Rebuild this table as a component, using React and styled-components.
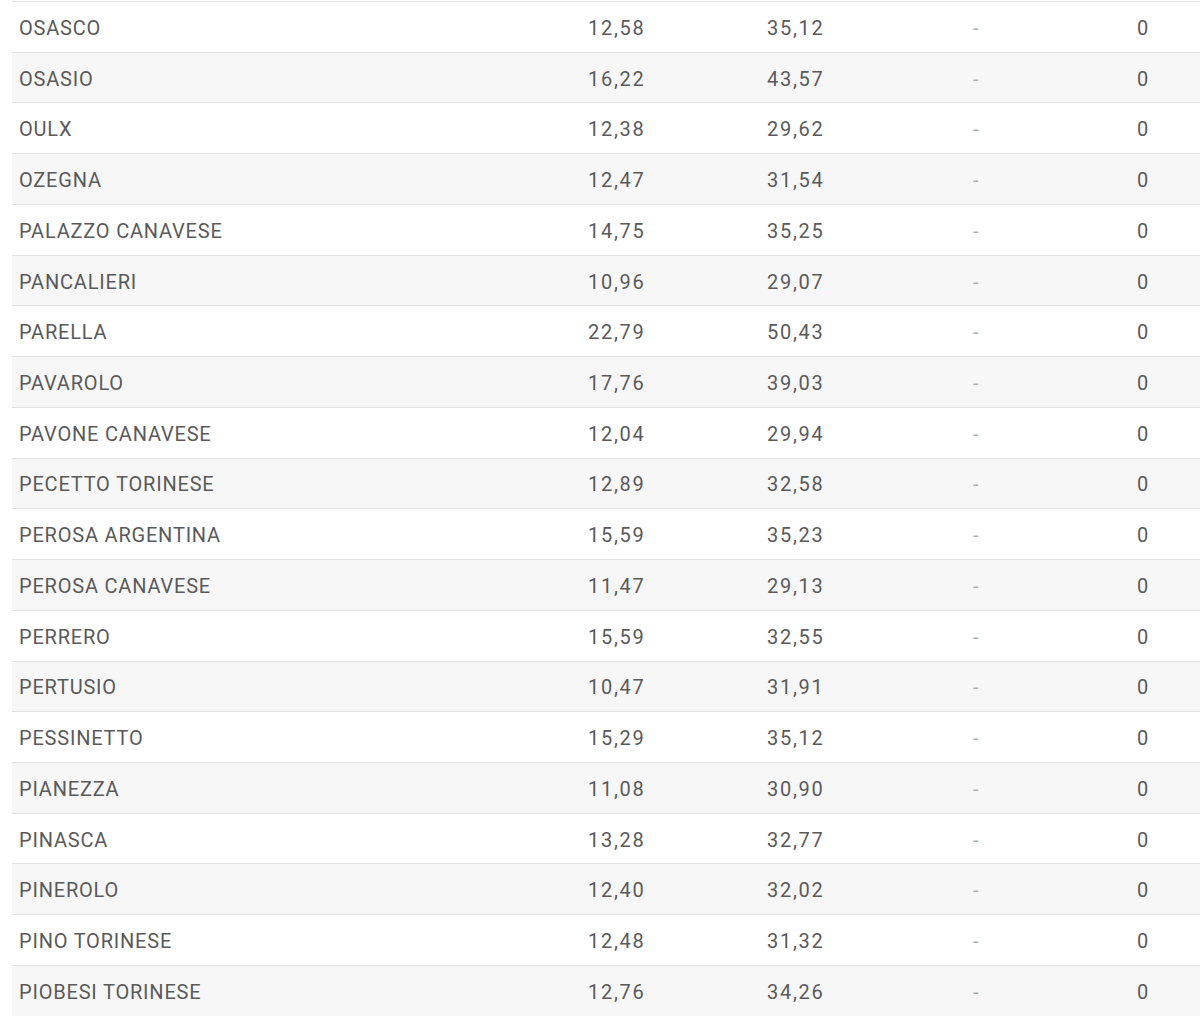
import React from "react";
import styled, { createGlobalStyle } from "styled-components";

const rows = [
  ["OSASCO", "12,58", "35,12"],
  ["OSASIO", "16,22", "43,57"],
  ["OULX", "12,38", "29,62"],
  ["OZEGNA", "12,47", "31,54"],
  ["PALAZZO CANAVESE", "14,75", "35,25"],
  ["PANCALIERI", "10,96", "29,07"],
  ["PARELLA", "22,79", "50,43"],
  ["PAVAROLO", "17,76", "39,03"],
  ["PAVONE CANAVESE", "12,04", "29,94"],
  ["PECETTO TORINESE", "12,89", "32,58"],
  ["PEROSA ARGENTINA", "15,59", "35,23"],
  ["PEROSA CANAVESE", "11,47", "29,13"],
  ["PERRERO", "15,59", "32,55"],
  ["PERTUSIO", "10,47", "31,91"],
  ["PESSINETTO", "15,29", "35,12"],
  ["PIANEZZA", "11,08", "30,90"],
  ["PINASCA", "13,28", "32,77"],
  ["PINEROLO", "12,40", "32,02"],
  ["PINO TORINESE", "12,48", "31,32"],
  ["PIOBESI TORINESE", "12,76", "34,26"],
];

const GlobalStyle = createGlobalStyle`
  body {
    margin: 0;
    background: #ffffff;
    font-family: Roboto, "Liberation Sans", sans-serif;
  }
`;

const Table = styled.div`
  margin: 1px 0 0 12px;
  border-top: 1px solid #e4e4e4;
  overflow: hidden;
  height: 1015px;
`;

const Row = styled.div`
  display: grid;
  grid-template-columns: 569px 179px 206px 164px 1fr;
  box-sizing: border-box;
  height: 50.74px;
  padding-top: 2px;
  align-items: center;
  border-bottom: 1px solid #e2e2e2;
  background: ${(p) => (p.$striped ? "#f7f7f7" : "#ffffff")};
`;

const Cell = styled.div`
  padding-left: 7px;
  font-size: 20px;
  color: ${(p) => (p.$muted ? "#b0b0b0" : "#5a5a5a")};
  letter-spacing: ${(p) => (p.$num ? "1.7px" : "0.8px")};
  white-space: nowrap;
`;

function App() {
  return (
    <>
      <GlobalStyle />
      <Table>
        {rows.map(([name, a, b], i) => (
          <Row key={name} $striped={i % 2 === 1}>
            <Cell>{name}</Cell>
            <Cell $num>{a}</Cell>
            <Cell $num>{b}</Cell>
            <Cell $muted>-</Cell>
            <Cell $num>0</Cell>
          </Row>
        ))}
      </Table>
    </>
  );
}

export default App;
